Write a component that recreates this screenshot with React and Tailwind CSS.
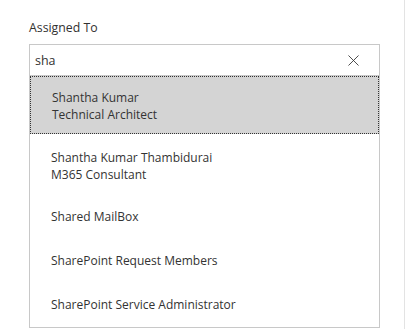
import { X } from 'lucide-react';

const items = [
  { lines: ['Shantha Kumar', 'Technical Architect'], h: 'h-[58px]', pad: 'pt-[12px]', active: true },
  { lines: ['Shantha Kumar Thambidurai', 'M365 Consultant'], h: 'h-[61px]', pad: 'pt-[15px]' },
  { lines: ['Shared MailBox'], h: 'h-[44px]', pad: 'pt-[13px]' },
  { lines: ['SharePoint Request Members'], h: 'h-[44px]', pad: 'pt-[13px]' },
  { lines: ['SharePoint Service Administrator'], h: 'h-[44px]', pad: 'pt-[13px]' },
];

export default function App() {
  return (
    <div className="w-[405px] h-[329px] bg-white border-r border-[#e3e3e3] overflow-hidden text-[#323130]"
      style={{ fontFamily: '"Open Sans", "Noto Sans", sans-serif' }}>
      <div className="ml-[29px] w-[351px] pt-[18px]">
        <div className="text-[12.3px] leading-[20px] mb-[6px]">Assigned To</div>
        <div className="h-[32px] border border-[#c8c8c8] flex items-center pl-[5px] pr-[16px]">
          <span className="flex-1 text-[12.5px] pt-[2px]">sha</span>
          <X size={19} strokeWidth={1.1} className="text-[#333] mt-[1px]" />
        </div>
        <div className="border-x border-b border-[#c8c8c8]">
          {items.map((it) => (
            <div key={it.lines[0]}
              className={`${it.h} ${it.pad} pl-[21px] text-[12px] leading-[17px] text-[#333] ${
                it.active ? 'bg-[#d4d4d4] border border-dotted border-[#333] pl-[20px] pt-[11px]' : ''}`}>
              {it.lines.map((l) => <div key={l}>{l}</div>)}
            </div>
          ))}
        </div>
      </div>
    </div>
  );
}
